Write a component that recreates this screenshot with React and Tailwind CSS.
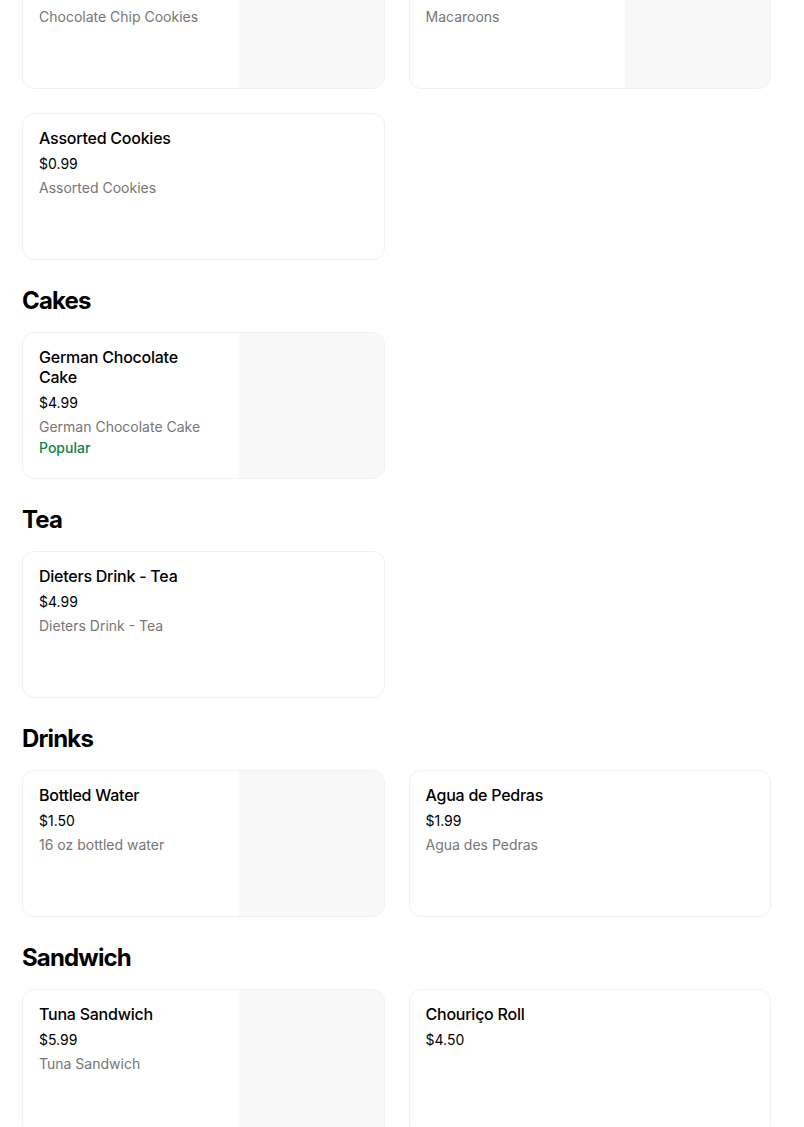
import React from "react";

const sections = [
  {
    title: null,
    items: [
      { name: "Chocolate Chip Cookies", price: "$0.99", desc: "Chocolate Chip Cookies", image: true },
      { name: "Macaroons", price: "$1.50", desc: "Macaroons", image: true },
      { name: "Assorted Cookies", price: "$0.99", desc: "Assorted Cookies" },
    ],
  },
  {
    title: "Cakes",
    items: [
      { name: "German Chocolate Cake", price: "$4.99", desc: "German Chocolate Cake", popular: true, image: true },
    ],
  },
  {
    title: "Tea",
    items: [{ name: "Dieters Drink - Tea", price: "$4.99", desc: "Dieters Drink - Tea" }],
  },
  {
    title: "Drinks",
    items: [
      { name: "Bottled Water", price: "$1.50", desc: "16 oz bottled water", image: true },
      { name: "Agua de Pedras", price: "$1.99", desc: "Agua des Pedras" },
    ],
  },
  {
    title: "Sandwich",
    items: [
      { name: "Tuna Sandwich", price: "$5.99", desc: "Tuna Sandwich", image: true },
      { name: "Chouriço Roll", price: "$4.50" },
    ],
  },
];

const ItemCard = ({ item }) => (
  <div className="flex h-[147px] overflow-hidden rounded-xl border border-[#f1f1f1] bg-white">
    <div className="flex-1 min-w-0 pl-4 pr-1 pt-[14px]">
      <h3 className="max-w-[180px] text-[16px] leading-5 font-medium tracking-[-0.015em] text-black">{item.name}</h3>
      <p className="mt-[6px] text-[14px] leading-5 text-black">{item.price}</p>
      {item.desc && <p className="mt-[4px] text-[14px] leading-5 text-[#767676]">{item.desc}</p>}
      {item.popular && <p className="mt-[1px] text-[14px] leading-5 font-medium text-[#0e8345]">Popular</p>}
    </div>
    {item.image && <div className="w-[145px] shrink-0 bg-[#f8f8f8]" />}
  </div>
);

export default function App() {
  return (
    <div className="min-h-screen overflow-hidden bg-white font-['Inter','Liberation_Sans',sans-serif] text-black">
      <div className="w-[771px] pl-[22px] -mt-[58px]">
        {sections.map((section, i) => (
          <section key={i} className={i === 0 ? "" : "mt-[25px]"}>
            {section.title && (
              <h2 className="mb-[15px] text-[24px] leading-8 font-bold tracking-[-0.035em]">{section.title}</h2>
            )}
            <div className="grid grid-cols-2 gap-x-6 gap-y-6">
              {section.items.map((item) => (
                <ItemCard key={item.name} item={item} />
              ))}
            </div>
          </section>
        ))}
      </div>
    </div>
  );
}
